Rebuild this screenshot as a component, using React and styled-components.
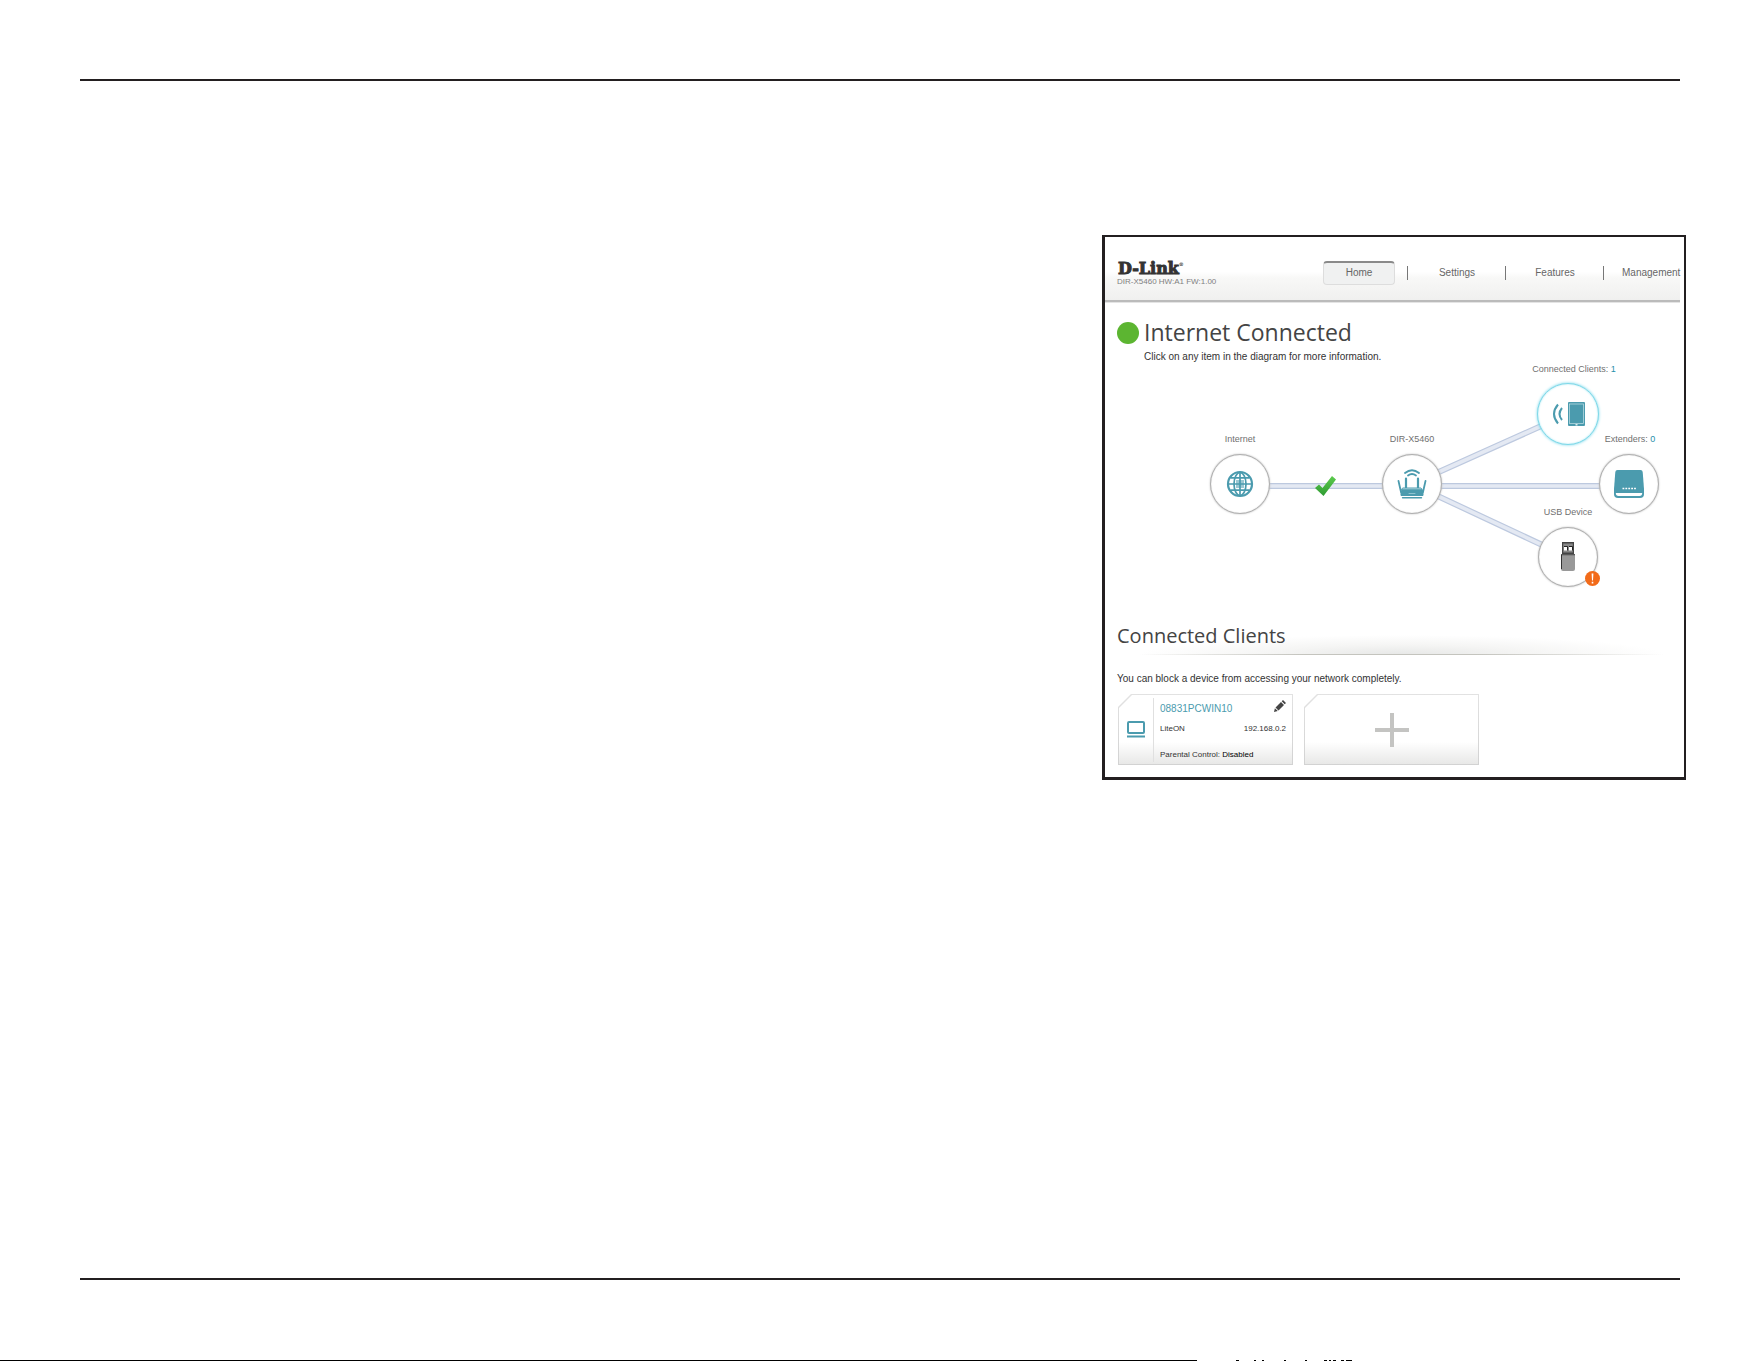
import React from "react";
import styled, { createGlobalStyle, css } from "styled-components";

const teal = "#4b9bae";
const ink = "#231f20";
const sans = '"Liberation Sans", Arial, sans-serif';
const display = '"Open Sans", "Noto Sans", sans-serif';

const GlobalStyle = createGlobalStyle`
  *, *::before, *::after { box-sizing: border-box; }
  body { margin: 0; background: #fff; font-family: ${sans}; color: #444; }
  h1, h2, p { margin: 0; font-weight: 400; }
  button { font: inherit; color: inherit; background: none; border: 0; padding: 0; cursor: pointer; }
`;

const Page = styled.div`
  min-height: 100vh;
  display: flex;
  flex-direction: column;
  padding-top: 79px;
`;

const Rule = styled.hr`
  width: auto;
  height: 2px;
  margin: 0 81px 0 80px;
  border: 0;
  background: ${ink};
`;

const Body = styled.main`
  flex: 1;
  display: flex;
  justify-content: flex-end;
  align-items: flex-start;
  padding: 154px 75px 154px 80px;
`;

const Foot = styled.footer`
  height: 81px;
  display: flex;
  align-items: flex-end;
`;

const PageEdge = styled.div`
  width: 68%;
  height: 1px;
  background: #000;
`;

const Panel = styled.section`
  width: 100%;
  max-width: 584px;
  border: solid ${ink};
  border-width: 2px 2px 3px 3px;
  padding-right: 4px;
`;

const TopBar = styled.header`
  height: 65px;
  display: flex;
  justify-content: space-between;
  padding: 24px 0 0 12px;
  background: linear-gradient(#fff 55%, #f8f8f7 65%, #f0f0ef);
  border-bottom: 2px solid #bbb;
  box-shadow: 0 1px 0 #e4e4e4;
`;

const Brand = styled.div`
  display: flex;
  flex-direction: column;
  white-space: nowrap;
`;

const Logo = styled.a`
  font: bold 16px/16px "DejaVu Serif", serif;
  color: #333;
  text-decoration: none;
  padding-left: 1px;
  -webkit-text-stroke: 1px #333;
  sup { font-size: 5px; line-height: 4px; vertical-align: 8px; -webkit-text-stroke: 0; }
`;

const Firmware = styled.p`
  font-size: 8px;
  line-height: 10px;
  color: #808080;
`;

const Nav = styled.nav`
  display: flex;
  height: 24px;
`;

const NavItem = styled.a`
  width: ${(p) => (p.$last ? 76 : 98)}px;
  height: 24px;
  padding-left: ${(p) => (p.$last ? 18 : 0)}px;
  display: flex;
  align-items: center;
  justify-content: ${(p) => (p.$last ? "flex-start" : "center")};
  font-size: 10px;
  line-height: 12px;
  color: #666;
  text-decoration: none;
  background: ${(p) =>
    p.$last ? "none" : "linear-gradient(#777, #777) right center / 1px 14px no-repeat"};
`;

const Tab = styled.span`
  width: 72px;
  height: 24px;
  line-height: 20px;
  text-align: center;
  background: #f0f1f1;
  border: 1px solid #ddd;
  border-top: 2px solid #8a8a8a;
  border-radius: 4px;
`;

const Status = styled.div`
  display: flex;
  gap: 5px;
  padding: 14px 0 0 12px;
`;

const StatusDot = styled.span`
  width: 22px;
  height: 22px;
  margin-top: 6px;
  border-radius: 50%;
  background: #5cb531;
`;

const StatusText = styled.div`
  display: flex;
  flex-direction: column;
  gap: 2px;
`;

const Title = styled.h1`
  font: 400 23px/32px ${display};
  color: #444;
`;

const Note = styled.p`
  font-size: 10px;
  line-height: 14px;
  color: #333;
`;

const Diagram = styled.div`
  position: relative;
  height: 252px;
`;

const Links = styled.svg`
  position: absolute;
  left: 0;
  top: 0;
`;

const Node = styled.button`
  position: absolute;
  left: ${(p) => p.$x - p.$r}px;
  top: ${(p) => p.$y - p.$r}px;
  width: ${(p) => p.$r * 2}px;
  height: ${(p) => p.$r * 2}px;
  display: flex;
  align-items: center;
  justify-content: center;
  border-radius: 50%;
  background: #fff;
  border: 1px solid ${(p) => (p.$active ? "#7fd8e8" : "#b0b0b0")};
  box-shadow: ${(p) =>
    p.$active ? "0 0 3px #6fd6ea, inset 0 0 2px #a5e6f2" : "0 0 2px #bbb, inset 0 0 1px #bbb"};
`;

const NodeLabel = styled.div`
  position: absolute;
  left: ${(p) => p.$x - 60}px;
  top: ${(p) => p.$y - 6}px;
  width: 120px;
  text-align: center;
  font-size: 9px;
  line-height: 12px;
  color: #707070;
  b { font-weight: 400; color: #2790ab; }
`;

const Overlay = styled.svg`
  position: absolute;
  left: ${(p) => p.$x}px;
  top: ${(p) => p.$y}px;
`;

const SectionHead = styled.div`
  height: 39px;
  margin: 0 5px 0 0;
  padding-left: 12px;
  background:
    linear-gradient(90deg, transparent 6%, #c4c4be 35%, #c4c4be 65%, transparent 98%) bottom / 100% 1px no-repeat,
    radial-gradient(ellipse 46% 20px at 52% 100%, #e6e7e6, #f5f5f4 50%, transparent) no-repeat;
`;

const SectionTitle = styled.h2`
  font: 400 20px/30px ${display};
  color: #444;
  padding-top: 5px;
`;

const ClientsBody = styled.div`
  padding: 17px 0 12px 12px;
`;

const Cards = styled.div`
  display: flex;
  gap: 11px;
  padding: 8px 0 0 1px;
`;

const cut = "polygon(13px 0, 100% 0, 100% 100%, 0 100%, 0 13px)";

const cardFace = css`
  width: 175px;
  height: 71px;
  padding: 1px;
  background: linear-gradient(#e2e2e2, #d2d2d2);
  clip-path: ${cut};
`;

const Card = styled.article`
  ${cardFace}
`;

const AddCard = styled.button`
  ${cardFace}
`;

const CardInner = styled.div`
  height: 100%;
  display: flex;
  align-items: center;
  justify-content: ${(p) => (p.$center ? "center" : "flex-start")};
  background: linear-gradient(#fff 68%, #e8e8e7);
  clip-path: ${cut};
`;

const DeviceCell = styled.div`
  width: 35px;
  height: 64px;
  display: flex;
  align-items: center;
  justify-content: center;
  border-right: 1px solid #e0e0e0;
`;

const Details = styled.div`
  flex: 1;
  height: 100%;
  display: flex;
  flex-direction: column;
  padding: 6px 6px 3px 6px;
`;

const DetailRow = styled.div`
  display: flex;
  justify-content: space-between;
  align-items: center;
  height: ${(p) => p.$h}px;
  font-size: 8px;
  line-height: 12px;
  color: #333;
  white-space: nowrap;
`;

const ClientName = styled.strong`
  font-weight: 400;
  font-size: 10px;
  color: ${teal};
  padding-top: 2px;
`;

const Parental = styled.p`
  margin-top: auto;
  font-size: 8px;
  line-height: 12px;
  color: #333;
  b { font-weight: 400; color: #000; }
`;

const GlobeIcon = () => (
  <svg width="28" height="28" viewBox="0 0 28 28" fill="none" stroke={teal} strokeWidth="1.7">
    <circle cx="14" cy="14" r="12" strokeWidth="2.2" />
    <ellipse cx="14" cy="14" rx="6" ry="11.5" />
    <path d="M14 2v24M2 14h24M4.5 7.8h19M4.5 20.2h19" />
    <path d="M10 10h8v8h-8z" fill={teal} fillOpacity=".55" stroke="none" />
  </svg>
);

const RouterIcon = () => (
  <svg width="30" height="30" viewBox="0 0 30 30" fill="none" stroke={teal} strokeLinecap="round">
    <path d="M8 4Q15-1.500 22 4" strokeWidth="1.8" />
    <path d="M11 6.500Q15 3.500 19 6.500" strokeWidth="1.8" />
    <path d="M1.500 12l2.500 11M28.500 12l-2.500 11" strokeWidth="1.8" />
    <path d="M9 9.500v9.500M21 9.500v9.500" strokeWidth="2.200" />
    <path d="M6 19h18l2 3v4.500H4V22z" fill={teal} strokeWidth="1" />
    <path d="M6 19.800h18" stroke="#a5cfd8" strokeWidth="1" />
    <path d="M12 24.500h6" stroke="#8dc3cf" strokeWidth="1" />
    <path d="M5.500 28.800h19" strokeWidth="1.400" />
  </svg>
);

const TabletIcon = () => (
  <svg width="34" height="26" viewBox="0 0 34 26" fill="none" stroke={teal}>
    <path d="M7 3.500Q-1 13 7 22.500" strokeWidth="2" />
    <path d="M11 7Q6 13 11 19" strokeWidth="2" />
    <rect x="17" y="1" width="17" height="24" rx="1" fill={teal} stroke="none" />
    <rect x="18.500" y="3" width="14" height="19.500" stroke="#c4e1e7" strokeWidth=".7" />
    <path d="M24.500 23.800h2" stroke="#fff" strokeWidth="1.200" />
  </svg>
);

const ExtenderIcon = () => (
  <svg width="30" height="28" viewBox="0 0 30 28">
    <path d="M3.500 0h23q2 0 2.200 2L30 19v5q0 4-4 4H4q-4 0-4-4v-5L1.300 2Q1.500 0 3.500 0z" fill={teal} />
    <path d="M1.800 23h26.400q0 3-2.700 3h-21q-2.700 0-2.700-3z" fill="#fff" />
    <path d="M8.500 18.500h13.500" stroke="#fff" strokeWidth="1.400" strokeDasharray="1.800 1.100" />
  </svg>
);

const UsbIcon = () => (
  <svg width="14" height="30" viewBox="0 0 14 30">
    <path d="M1 0h12v12H1z" fill="#444" />
    <path d="M2.200 1.500h9.600v9H2.200z" fill="#888" />
    <path d="M3 5h3.500v3.500H3zM8 5h3.500v3.500H8z" fill="#fff" />
    <path d="M3 4.500h3.500v4M8 4.500h3.500v4" fill="none" stroke="#222" strokeWidth="1" />
    <path d="M0 13h14v14q0 2-2 2H2q-2 0-2-2z" fill="#999" />
    <path d="M0 12.700h14M.5 13v14" fill="none" stroke="#333" strokeWidth="1" />
  </svg>
);

const LaptopIcon = () => (
  <svg width="18" height="17" viewBox="0 0 18 17" fill="none" stroke={teal} strokeWidth="2">
    <rect x="1" y="1" width="16" height="11" rx="1" />
    <path d="M0 15.500h18" />
  </svg>
);

const PencilIcon = () => (
  <svg width="12" height="12" viewBox="0 0 12 12" fill="#444">
    <path d="M0 12l.9-3.800L3.800 11zM1.500 7.500L7 2l3 3-5.500 5.500zM7.700 1.300L9 0l3 3-1.300 1.300z" />
  </svg>
);

const PlusIcon = () => (
  <svg width="34" height="34" viewBox="0 0 34 34">
    <path d="M17 0v34M0 17h34" stroke="#c4c4c2" strokeWidth="4" />
  </svg>
);

const nodes = [
  { id: "Internet", x: 135, y: 120, r: 30, lx: 135, ly: 75, Icon: GlobeIcon },
  { id: "DIR-X5460", x: 307, y: 120, r: 30, lx: 307, ly: 75, Icon: RouterIcon },
  { id: "Connected Clients", count: 1, active: true, x: 463, y: 50, r: 31, lx: 469, ly: 5, Icon: TabletIcon },
  { id: "Extenders", count: 0, x: 524, y: 120, r: 30, lx: 525, ly: 75, Icon: ExtenderIcon },
  { id: "USB Device", x: 463, y: 193, r: 30, lx: 463, ly: 148, Icon: UsbIcon },
];

const linkPath = "M160 122H500M307 120L463 50M307 120L463 193";

export default function App() {
  return (
    <>
      <GlobalStyle />
      <Page>
        <Rule />
        <Body>
          <Panel>
            <TopBar>
              <Brand>
                <Logo href="#">
                  D-Link<sup>®</sup>
                </Logo>
                <Firmware>DIR-X5460 HW:A1 FW:1.00</Firmware>
              </Brand>
              <Nav>
                <NavItem href="#home">
                  <Tab>Home</Tab>
                </NavItem>
                <NavItem href="#settings">Settings</NavItem>
                <NavItem href="#features">Features</NavItem>
                <NavItem href="#management" $last>
                  Management
                </NavItem>
              </Nav>
            </TopBar>

            <Status>
              <StatusDot />
              <StatusText>
                <Title>Internet Connected</Title>
                <Note>Click on any item in the diagram for more information.</Note>
              </StatusText>
            </Status>

            <Diagram>
              <Links width="575" height="250" viewBox="0 0 575 250" fill="none">
                <path d={linkPath} stroke="#bdc9df" strokeWidth="6" />
                <path d={linkPath} stroke="#e4e9f3" strokeWidth="3.600" />
              </Links>
              {nodes.map(({ id, count, active, x, y, r, lx, ly, Icon }) => (
                <React.Fragment key={id}>
                  <NodeLabel $x={lx} $y={ly}>
                    {id}
                    {count !== undefined && (
                      <>
                        : <b>{count}</b>
                      </>
                    )}
                  </NodeLabel>
                  <Node type="button" aria-label={id} $x={x} $y={y} $r={r} $active={active}>
                    <Icon />
                  </Node>
                </React.Fragment>
              ))}
              <Overlay $x={210} $y={112} width="21" height="20" viewBox="0 0 21 20">
                <defs>
                  <linearGradient id="tick" x1="0" y1="0" x2="0" y2="1">
                    <stop offset="0" stopColor="#5ccb4c" />
                    <stop offset="1" stopColor="#2f9b33" />
                  </linearGradient>
                </defs>
                <path d="M0 12l4-3.500L7.500 12 17 0l4 3.500L8.500 20z" fill="url(#tick)" />
              </Overlay>
              <Overlay $x={480} $y={207} width="15" height="15" viewBox="0 0 15 15">
                <circle cx="7.500" cy="7.500" r="7.500" fill="#f26b1a" />
                <path d="M6.600 2.500h1.800l-.4 7h-1zM6.700 10.800h1.600v1.600H6.700z" fill="#fff" />
              </Overlay>
            </Diagram>

            <SectionHead>
              <SectionTitle>Connected Clients</SectionTitle>
            </SectionHead>
            <ClientsBody>
              <Note>You can block a device from accessing your network completely.</Note>
              <Cards>
                <Card>
                  <CardInner>
                    <DeviceCell>
                      <LaptopIcon />
                    </DeviceCell>
                    <Details>
                      <DetailRow $h={14}>
                        <ClientName>08831PCWIN10</ClientName>
                        <button type="button" aria-label="Edit client">
                          <PencilIcon />
                        </button>
                      </DetailRow>
                      <DetailRow $h={28}>
                        <span>LiteON</span>
                        <span>192.168.0.2</span>
                      </DetailRow>
                      <Parental>
                        Parental Control: <b>Disabled</b>
                      </Parental>
                    </Details>
                  </CardInner>
                </Card>
                <AddCard type="button" aria-label="Add client">
                  <CardInner $center>
                    <PlusIcon />
                  </CardInner>
                </AddCard>
              </Cards>
            </ClientsBody>
          </Panel>
        </Body>
        <Rule />
        <Foot>
          <PageEdge />
          <svg width="160" height="1" viewBox="0 0 160 1" fill="#000">
            <path d="M39 0h3v1h-3zM57 0h2v1h-2zM65 0h2v1h-2zM87 0h2v1h-2zM108 0h2v1h-2zM127 0h3v1h-3zM132 0h2v1h-2zM136 0h3v1h-3zM144 0h3v1h-3zM149 0h6v1h-6z" />
          </svg>
        </Foot>
      </Page>
    </>
  );
}
